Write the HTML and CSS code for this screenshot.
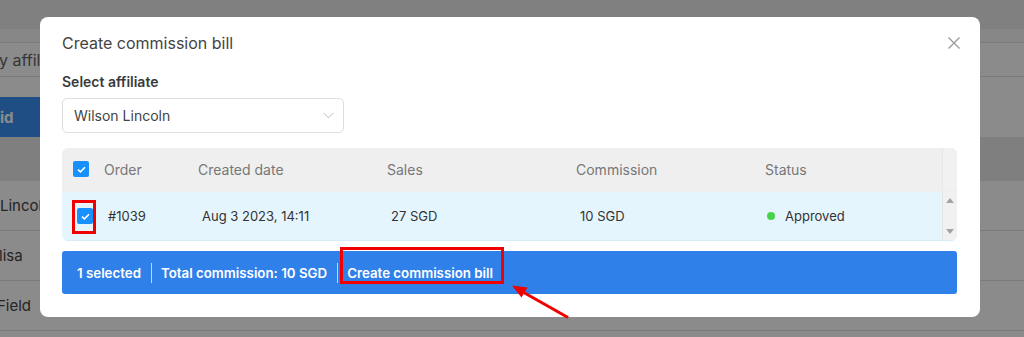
FILE: index.html
```html
<!DOCTYPE html>
<html>
<head>
<meta charset="utf-8">
<link rel="stylesheet" href="styles.css">
</head>
<body>
<div class="page">
  <div class="topbar"></div>
  <div class="substrip"></div>
  <div class="filter-row"><span class="filter-text">y affiliate</span></div>
  <div class="action-row"><span class="paid-btn">id</span></div>
  <div class="bg-head"></div>
  <div class="bg-row"><span>Lincoln</span></div>
  <div class="bg-row"><span class="s1">lisa</span></div>
  <div class="bg-row"><span class="s2">Field</span></div>
  <div class="bg-tail"></div>
</div>
<div class="overlay"></div>
<div class="modal">
  <div class="modal-head">
    <h2 class="modal-title">Create commission bill</h2>
    <button class="close-btn" aria-label="Close">
      <svg width="12" height="12" viewBox="0 0 12 12"><path d="M0.5 0.5L11.5 11.5M11.5 0.5L0.5 11.5" stroke="#9a9a9a" stroke-width="1.3" fill="none"/></svg>
    </button>
  </div>
  <div class="field-label">Select affiliate</div>
  <div class="select">
    <span>Wilson Lincoln</span>
    <svg width="11" height="7" viewBox="0 0 11 7"><path d="M0.5 0.8L5.5 5.8L10.5 0.8" stroke="#bdbdbd" stroke-width="1" fill="none"/></svg>
  </div>
  <div class="table">
    <div class="thead">
      <div class="cell cb-cell"><span class="checkbox"><svg width="9" height="7" viewBox="0 0 9 7"><path d="M1 3.6L3.4 5.8L8 1.2" stroke="#fff" stroke-width="1.6" fill="none"/></svg></span></div>
      <div class="cell">Order</div>
      <div class="cell">Created date</div>
      <div class="cell">Sales</div>
      <div class="cell">Commission</div>
      <div class="cell">Status</div>
      <div class="scroll-top"></div>
    </div>
    <div class="trow">
      <div class="cell cb-cell">
        <span class="checkbox"><svg width="9" height="7" viewBox="0 0 9 7"><path d="M1 3.6L3.4 5.8L8 1.2" stroke="#fff" stroke-width="1.6" fill="none"/></svg></span>
        <span class="mark mark-cb"></span>
      </div>
      <div class="cell">#1039</div>
      <div class="cell">Aug 3 2023, 14:11</div>
      <div class="cell">27 SGD</div>
      <div class="cell">10 SGD</div>
      <div class="cell"><span class="dot"></span>Approved</div>
      <div class="scroll-track">
        <svg width="8" height="5" viewBox="0 0 8 5"><path d="M0 5L4 0L8 5Z" fill="#a3a3a3"/></svg>
        <svg width="8" height="5" viewBox="0 0 8 5"><path d="M0 0L4 5L8 0Z" fill="#a3a3a3"/></svg>
      </div>
    </div>
  </div>
  <div class="bulk-bar">
    <span>1 selected</span>
    <span class="sep"></span>
    <span>Total commission: 10 SGD</span>
    <span class="sep"></span>
    <span class="create-link">Create commission bill<span class="mark mark-link"></span></span>
  </div>
</div>
<svg class="arrow" width="70" height="40" viewBox="0 0 70 40">
  <line x1="62" y1="37.5" x2="16" y2="11.5" stroke="#f00000" stroke-width="3"/>
  <polygon points="6,5.5 21.5,7.5 15.5,17.5" fill="#f00000"/>
</svg>
</body>
</html>
```
FILE: styles.css
```css
* { box-sizing: border-box; }
html, body { margin: 0; padding: 0; }
body {
  width: 1024px;
  height: 337px;
  overflow: hidden;
  position: relative;
  font-family: Inter, "Noto Sans", "DejaVu Sans", sans-serif;
  background: #ffffff;
}
.page { display: flex; flex-direction: column; }
.topbar { height: 29px; background: #ebebeb; }
.substrip { height: 14px; background: #f7f7f7; border-bottom: 1px solid #e2e2e2; }
.filter-row {
  height: 34px; display: flex; align-items: center;
  border-bottom: 1px solid #e2e2e2; color: #666; font-size: 16px;
}
.filter-text { margin-left: -1px; }
.action-row { height: 60px; display: flex; align-items: flex-end; }
.paid-btn {
  height: 40px; width: 120px; background: #3a8ff5; color: #fff; font-weight: 700;
  font-size: 15px; display: flex; align-items: center;
}
.bg-head { height: 44px; background: #e9e9e9; }
.bg-row {
  height: 50px; border-bottom: 1px solid #e2e2e2; display: flex; align-items: center;
  font-size: 15px; color: #444;
}
.bg-row .s1 { margin-left: -1px; }
.bg-row .s2 { margin-left: -3px; }
.bg-tail { height: 4px; }
.overlay { position: absolute; inset: 0; background: rgba(0,0,0,0.455); }

.modal {
  position: absolute; left: 40px; top: 17px; width: 940px; height: 300px;
  background: #fff; border-radius: 8px;
  padding: 14px 23px 23px 22px;
  display: flex; flex-direction: column;
  color: #333;
}
.modal-head { display: flex; align-items: center; justify-content: space-between; height: 24px; }
.modal-title { margin: 0; font-size: 16px; font-weight: 400; color: #444; line-height: 24px; }
.close-btn {
  border: 0; background: none; padding: 0; margin-right: -3px; width: 12px; height: 12px;
  display: flex;
}
.field-label { margin-top: 17px; font-size: 14px; font-weight: 600; line-height: 20px; color: #3a3a3a; }
.select {
  margin-top: 6px; width: 282px; height: 35px; border: 1px solid #dedede; border-radius: 5px;
  display: flex; align-items: center; justify-content: space-between;
  padding: 0 9px 0 11px; font-size: 14px; color: #444;
}
.table {
  margin-top: 15px; border-radius: 6px; overflow: hidden;
  font-size: 13px;
}
.thead, .trow {
  display: grid;
  grid-template-columns: 42px 94px 189px 189px 189px 1fr 15px;
}
.thead { height: 44px; background: #efefef; color: #777; font-size: 14px; padding-bottom: 2px; }
.trow { height: 49px; background: #e5f5fd; color: #333; border-bottom: 1px solid #d8ecf6; }
.cell { display: flex; align-items: center; position: relative; }
.thead .cb-cell { padding-left: 11px; }
.trow .cell { padding-left: 4px; }
.trow .cb-cell { padding-left: 15px; }
.checkbox {
  width: 16px; height: 16px; border-radius: 2px; background: #1890ff;
  display: flex; align-items: center; justify-content: center;
}
.dot { width: 8px; height: 8px; border-radius: 50%; background: #4ad34a; margin: 0 10px 0 -2px; }
.scroll-top { background: #f1f1f1; border-left: 1px solid #e6e6e6; }
.scroll-track {
  background: #f1f1f1; border-left: 1px solid #e6e6e6;
  display: flex; flex-direction: column; align-items: center; justify-content: space-between;
  padding: 6px 0 6px;
}
.mark { position: absolute; border: 3px solid #f00000; pointer-events: none; }
.mark-cb { left: 10px; top: 8px; width: 24px; height: 34px; }
.bulk-bar {
  margin-top: 10px; height: 43px; background: #3080ea; border-radius: 3px;
  display: flex; align-items: center; padding-left: 15px;
  color: #fff; font-size: 13.3px; font-weight: 600;
}
.sep { width: 1px; height: 20px; background: rgba(255,255,255,0.7); margin: 0 9px 0 10px; }
.create-link { position: relative; }
.mark-link { left: -7px; top: -18px; width: 164px; height: 37px; }
.arrow { position: absolute; left: 506px; top: 280px; }
```
